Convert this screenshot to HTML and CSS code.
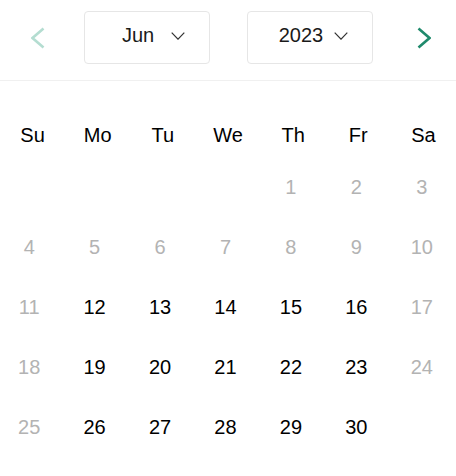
FILE: index.html
```html
<!DOCTYPE html>
<html lang="en">
<head>
  <meta charset="UTF-8" />
  <meta name="viewport" content="width=device-width, initial-scale=1.0" />
  <title>Calendar</title>
  <link rel="stylesheet" href="styles.css">
</head>
<body>
  <div class="calendar">
    <!-- Header -->
    <div class="header">
      <button class="nav nav-prev" aria-label="Previous month">
        <svg width="14" height="22" viewBox="0 0 14 22"><polyline points="12.5,1.5 1.5,11 12.5,20.5" fill="none" stroke="#b4ddd1" stroke-width="2.6" /></svg>
      </button>
      <div class="select">
        <span class="select-value">Jun</span>
        <svg class="caret" width="14" height="8" viewBox="0 0 14 8"><polyline points="0.7,0.7 7,7.2 13.3,0.7" fill="none" stroke="#333" stroke-width="1.2" /></svg>
      </div>
      <div class="spacer"></div>
      <div class="select">
        <span class="select-value">2023</span>
        <svg class="caret" width="14" height="8" viewBox="0 0 14 8"><polyline points="0.7,0.7 7,7.2 13.3,0.7" fill="none" stroke="#333" stroke-width="1.2" /></svg>
      </div>
      <button class="nav nav-next" aria-label="Next month">
        <svg width="14" height="22" viewBox="0 0 14 22"><polyline points="1.5,1.5 12.5,11 1.5,20.5" fill="none" stroke="#1f8a6c" stroke-width="2.6" /></svg>
      </button>
    </div>

    <!-- Days -->
    <div class="weekdays">
      <div>Su</div><div>Mo</div><div>Tu</div><div>We</div><div>Th</div><div>Fr</div><div>Sa</div>
    </div>
    <div class="days" id="days"></div>
  </div>

  <script>
    const daysEl = document.getElementById('days');
    const firstWeekday = 4; // Thursday, June 1 2023

    for (let i = 0; i < firstWeekday; i++) {
      daysEl.appendChild(document.createElement('div'));
    }

    for (let d = 1; d <= 30; d++) {
      const cell = document.createElement('div');
      const weekday = (firstWeekday + d - 1) % 7;
      cell.textContent = d;
      if (d <= 10 || weekday === 0 || weekday === 6) {
        cell.className = 'disabled';
      }
      daysEl.appendChild(cell);
    }
  </script>
</body>
</html>
```

FILE: styles.css
```css
body {
  margin: 0;
  padding: 0;
  font-family: "Liberation Sans", Arial, sans-serif;
  background: #fff;
  color: #000;
}

.calendar {
  width: 456px;
}

.header {
  display: grid;
  grid-template-columns: 84px 126px 37px 126px 83px;
  align-items: start;
  height: 69px;
  padding-top: 11px;
  border-bottom: 1px solid #f0f0f0;
}

.nav {
  display: flex;
  align-items: center;
  height: 53px;
  padding: 0;
  margin: 0;
  border: none;
  background: none;
  cursor: pointer;
}

.nav svg {
  display: block;
}

.nav-prev {
  padding-left: 31px;
}

.nav-next {
  padding-left: 44px;
}

.select {
  position: relative;
  height: 53px;
  box-sizing: border-box;
  border: 1px solid #e6e6e6;
  border-radius: 4px;
  padding-right: 18px;
  text-align: center;
  font-size: 20px;
  line-height: 47px;
  color: #1a1a1a;
}

.caret {
  position: absolute;
  top: 20px;
  right: 24px;
}

.weekdays,
.days {
  display: grid;
  grid-template-columns: repeat(7, 1fr);
  text-align: center;
  font-size: 20px;
}

.weekdays {
  margin-top: 32px;
  line-height: 44px;
}

.days {
  width: 458px;
  margin-left: -3.5px;
}

.days div {
  height: 60px;
  line-height: 60px;
}

.days .disabled {
  color: #b3b3b3;
}
```
